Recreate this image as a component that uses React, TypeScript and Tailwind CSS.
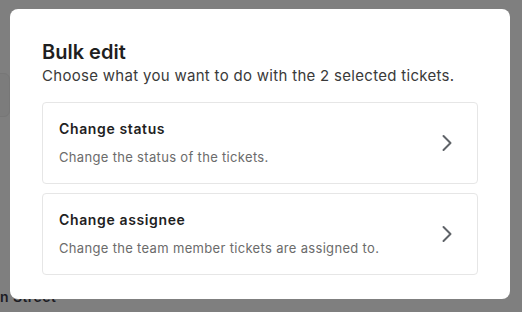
import React from "react";

function Chevron() {
  return (
    <svg width="12" height="18" viewBox="0 0 12 18" fill="none" className="shrink-0">
      <path d="M2.5 2 L9.5 9 L2.5 16" stroke="#5f6368" strokeWidth="2" strokeLinecap="round" strokeLinejoin="round" />
    </svg>
  );
}

function Option({ title, desc }: { title: string; desc: string }) {
  return (
    <div className="flex items-center rounded-[4px] border border-[#e6e6e6] bg-white pl-4 pr-6 h-[82px]">
      <div className="flex-1 flex flex-col">
        <div className="text-[14px] leading-5 font-semibold tracking-[0.045em] text-[#1f1f1f]">{title}</div>
        <div className="mt-[8px] text-[13px] leading-5 tracking-[0.025em] text-[#6b6b6b]">{desc}</div>
      </div>
      <Chevron />
    </div>
  );
}

export default function App() {
  return (
    <div
      className="relative w-[522px] h-[312px] overflow-hidden bg-[#7f7f7f]"
      style={{ fontFamily: "Inter, 'Noto Sans', sans-serif" }}
    >
      <div className="absolute left-[-60px] top-[73px] w-[70px] h-[44px] rounded-md border border-[#777] bg-[#7c7c7c]" />
      <div className="absolute left-0 top-[287px] text-[14px] leading-5 font-semibold tracking-[0.03em] text-[#1c1c24]">
        n Street
      </div>
      <div className="absolute left-[10px] top-[9px] w-[500px] h-[290px] rounded-[8px] bg-white px-8 pt-[29px]">
        <h2 className="text-[20px] leading-[28px] font-semibold text-[#1f1f1f]">Bulk edit</h2>
        <p className="text-[15px] leading-[20px] tracking-[0.02em] text-[#3a3a3a]">
          Choose what you want to do with the 2 selected tickets.
        </p>
        <div className="mt-4 flex flex-col gap-[9px]">
          <Option title="Change status" desc="Change the status of the tickets." />
          <Option title="Change assignee" desc="Change the team member tickets are assigned to." />
        </div>
      </div>
    </div>
  );
}
